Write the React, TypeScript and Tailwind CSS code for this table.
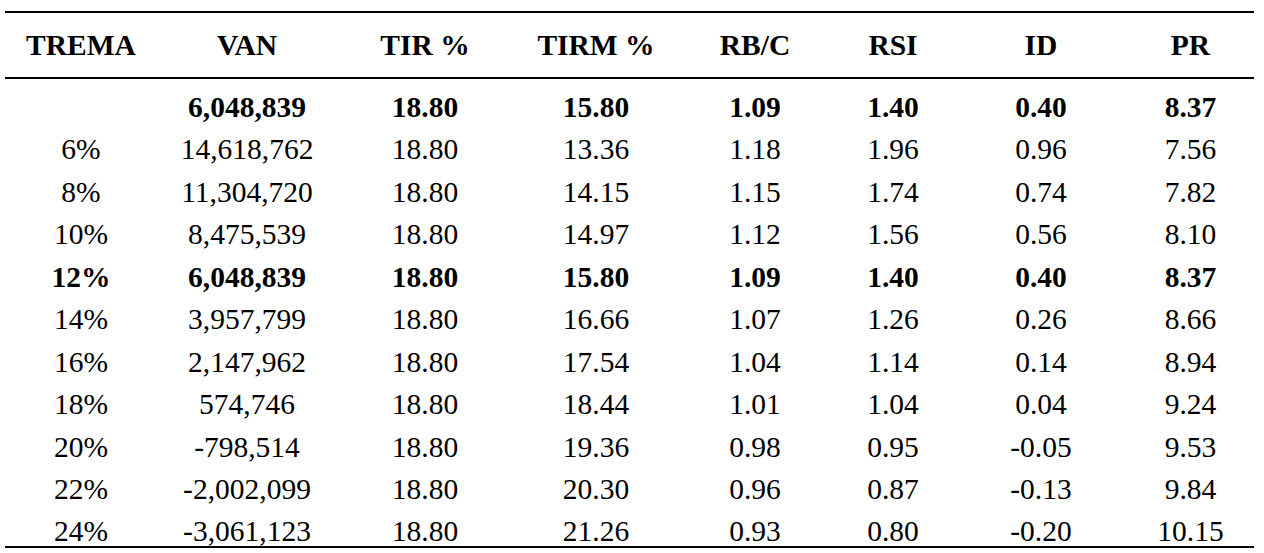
import React from "react";

const header = ["TREMA", "VAN", "TIR %", "TIRM %", "RB/C", "RSI", "ID", "PR"];

const rows: { cells: string[]; bold?: boolean }[] = [
  { cells: ["", "6,048,839", "18.80", "15.80", "1.09", "1.40", "0.40", "8.37"], bold: true },
  { cells: ["6%", "14,618,762", "18.80", "13.36", "1.18", "1.96", "0.96", "7.56"] },
  { cells: ["8%", "11,304,720", "18.80", "14.15", "1.15", "1.74", "0.74", "7.82"] },
  { cells: ["10%", "8,475,539", "18.80", "14.97", "1.12", "1.56", "0.56", "8.10"] },
  { cells: ["12%", "6,048,839", "18.80", "15.80", "1.09", "1.40", "0.40", "8.37"], bold: true },
  { cells: ["14%", "3,957,799", "18.80", "16.66", "1.07", "1.26", "0.26", "8.66"] },
  { cells: ["16%", "2,147,962", "18.80", "17.54", "1.04", "1.14", "0.14", "8.94"] },
  { cells: ["18%", "574,746", "18.80", "18.44", "1.01", "1.04", "0.04", "9.24"] },
  { cells: ["20%", "-798,514", "18.80", "19.36", "0.98", "0.95", "-0.05", "9.53"] },
  { cells: ["22%", "-2,002,099", "18.80", "20.30", "0.96", "0.87", "-0.13", "9.84"] },
  { cells: ["24%", "-3,061,123", "18.80", "21.26", "0.93", "0.80", "-0.20", "10.15"] },
];

const gridCols =
  "grid grid-cols-[152px_180px_176px_166px_152px_124px_172px_127px]";

export default function App() {
  return (
    <div
      className="w-[1264px] h-[553px] bg-white pt-[11px] pl-[5px] overflow-hidden text-black"
      style={{ fontFamily: '"Liberation Serif", "Times New Roman", serif' }}
    >
      <div className="w-[1249px] border-t-2 border-black">
        <div className={`${gridCols} h-[66px] items-center border-b-2 border-black`}>
          {header.map((h) => (
            <div key={h} className="text-center text-[29.5px] leading-[34px] font-bold">
              {h}
            </div>
          ))}
        </div>
        <div className="border-b-2 border-black">
          {rows.map((r, i) => (
            <div
              key={i}
              className={`${gridCols} h-[42.45px] items-center pt-[11px] ${r.bold ? "font-bold" : "font-normal"}`}
            >
              {r.cells.map((c, j) => (
                <div key={j} className="text-center text-[29.5px] leading-[34px]">
                  {c}
                </div>
              ))}
            </div>
          ))}
        </div>
      </div>
    </div>
  );
}
